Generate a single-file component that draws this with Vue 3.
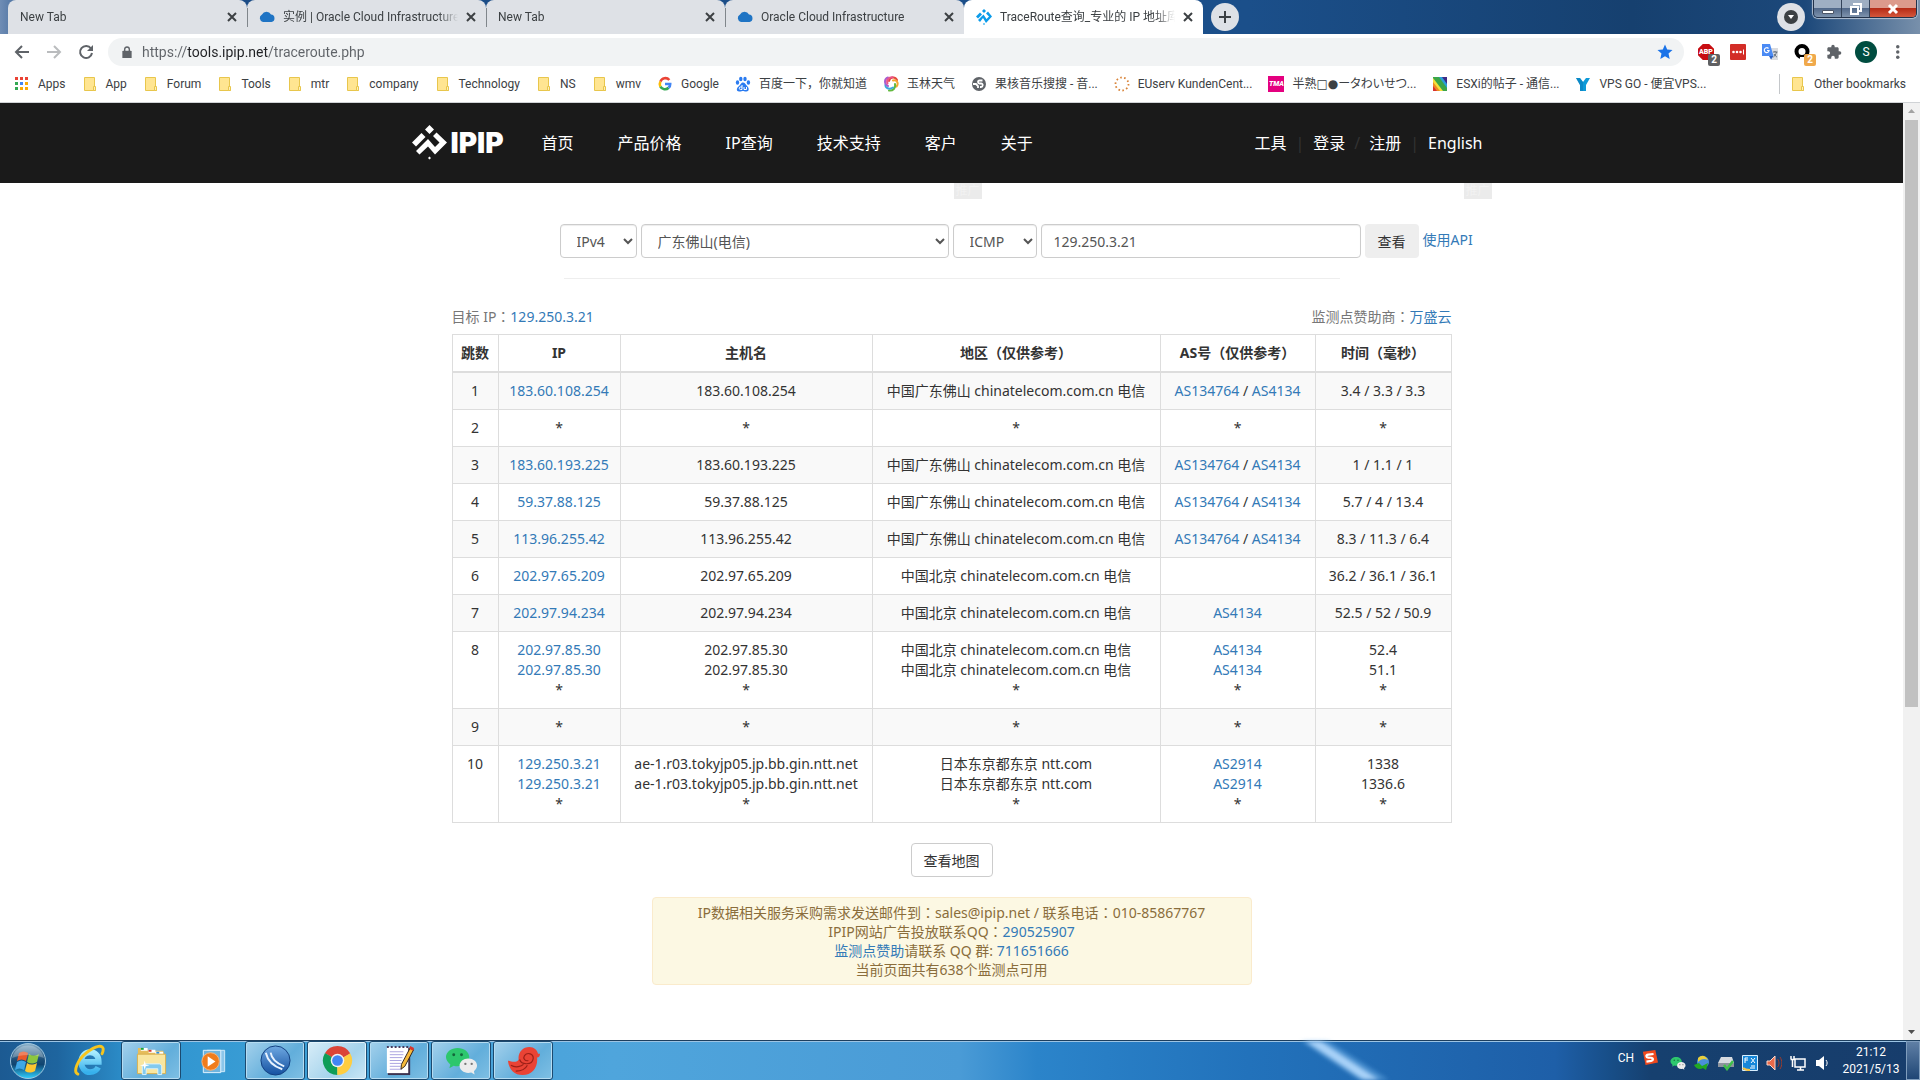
<script setup>

import { ref } from 'vue';

const tabs = ref([
  { title: "New Tab", icon: "", active: false },
  { title: "实例 | Oracle Cloud Infrastructure", icon: "cloud", active: false },
  { title: "New Tab", icon: "", active: false },
  { title: "Oracle Cloud Infrastructure", icon: "cloud", active: false },
  { title: "TraceRoute查询_专业的 IP 地址库", icon: "ipip", active: true },
]);

const bookmarks = [
  { title: "Apps", icon: "apps" },
  { title: "App", icon: "folder" },
  { title: "Forum", icon: "folder" },
  { title: "Tools", icon: "folder" },
  { title: "mtr", icon: "folder" },
  { title: "company", icon: "folder" },
  { title: "Technology", icon: "folder" },
  { title: "NS", icon: "folder" },
  { title: "wmv", icon: "folder" },
  { title: "Google", icon: "google" },
  { title: "百度一下，你就知道", icon: "baidu" },
  { title: "玉林天气", icon: "weather" },
  { title: "果核音乐搜搜 - 音...", icon: "globe" },
  { title: "EUserv KundenCent...", icon: "euserv" },
  { title: "半熟□●ータわいせつ...", label: "TMA", labelClass: "text-icon--pink", kana: true },
  { title: "ESXi的帖子 - 通信...", icon: "rainbow" },
  { title: "VPS GO - 便宜VPS...", icon: "vps" },
];

const extensions = [
  { name: "ABP", label: "ABP", labelClass: "text-icon--octagon", badge: "2", badgeClass: "badge--grey" },
  { name: "LastPass", icon: "lastpass" },
  { name: "Translate", icon: "translate" },
  { name: "Ring", icon: "ring", badge: "2", badgeClass: "badge--orange" },
  { name: "Extensions", icon: "puzzle" },
];

const url = ref("https://tools.ipip.net/traceroute.php");

const siteNav = ["首页", "产品价格", "IP查询", "技术支持", "客户", "关于"];

const version = ref("IPv4");
const node = ref("广东佛山(电信)");
const protocol = ref("ICMP");
const target = ref("129.250.3.21");

const columns = ["跳数", "IP", "主机名", "地区（仅供参考）", "AS号（仅供参考）", "时间（毫秒）"];

const foshan = "中国广东佛山 chinatelecom.com.cn 电信";
const beijing = "中国北京 chinatelecom.com.cn 电信";
const tokyo = "日本东京都东京 ntt.com";
const tokyoHost = "ae-1.r03.tokyjp05.jp.bb.gin.ntt.net";

function createHop(id, ips, hosts, regions, asns, times) {
  return { id, ips, hosts, regions, asns, times };
}

function createLostHop(id) {
  return createHop(id, ["*"], ["*"], ["*"], [["*"]], ["*"]);
}

const hops = ref([
  createHop(1, ["183.60.108.254"], ["183.60.108.254"], [foshan], [["AS134764", "AS4134"]], ["3.4 / 3.3 / 3.3"]),
  createLostHop(2),
  createHop(3, ["183.60.193.225"], ["183.60.193.225"], [foshan], [["AS134764", "AS4134"]], ["1 / 1.1 / 1"]),
  createHop(4, ["59.37.88.125"], ["59.37.88.125"], [foshan], [["AS134764", "AS4134"]], ["5.7 / 4 / 13.4"]),
  createHop(5, ["113.96.255.42"], ["113.96.255.42"], [foshan], [["AS134764", "AS4134"]], ["8.3 / 11.3 / 6.4"]),
  createHop(6, ["202.97.65.209"], ["202.97.65.209"], [beijing], [], ["36.2 / 36.1 / 36.1"]),
  createHop(7, ["202.97.94.234"], ["202.97.94.234"], [beijing], [["AS4134"]], ["52.5 / 52 / 50.9"]),
  createHop(8, ["202.97.85.30", "202.97.85.30", "*"], ["202.97.85.30", "202.97.85.30", "*"], [beijing, beijing, "*"], [["AS4134"], ["AS4134"], ["*"]], ["52.4", "51.1", "*"]),
  createLostHop(9),
  createHop(10, ["129.250.3.21", "129.250.3.21", "*"], [tokyoHost, tokyoHost, "*"], [tokyo, tokyo, "*"], [["AS2914"], ["AS2914"], ["*"]], ["1338", "1336.6", "*"]),
]);

const tasks = [
  { name: "Internet Explorer", icon: "ie", open: false },
  { name: "Explorer", icon: "explorer", open: true },
  { name: "Media Player", icon: "player", open: false },
  { name: "Router", icon: "router", open: true },
  { name: "Chrome", icon: "chrome", open: true, current: true },
  { name: "Notepad", icon: "notepad", open: true },
  { name: "WeChat", icon: "wechat", open: true },
  { name: "Nautilus", icon: "nautilus", open: true },
];

const trayIcons = ["wechat", "idm", "drive", "panel", "speaker", "network", "volume"];

function selectTab(tab) {
  for (const item of tabs.value) {
    item.active = item === tab;
  }
}

</script>

<template>
  <svg class="sprite" aria-hidden="true">
    <defs>
      <linearGradient id="g-orb" x1="0" y1="0" x2="0" y2="1">
        <stop offset="0" stop-color="#8fb4cc" />
        <stop offset=".45" stop-color="#1d4f78" />
        <stop offset=".6" stop-color="#0f4470" />
        <stop offset="1" stop-color="#2fd0ff" />
      </linearGradient>
      <linearGradient id="g-ie" x1="0" y1="0" x2="0" y2="1">
        <stop offset="0" stop-color="#a8ecff" />
        <stop offset="1" stop-color="#36b0ec" />
      </linearGradient>
      <linearGradient id="g-router" x1="0" y1="0" x2="0" y2="1">
        <stop offset="0" stop-color="#6fa9e2" />
        <stop offset="1" stop-color="#1450a0" />
      </linearGradient>
    </defs>
    <symbol id="i-cloud" viewBox="0 0 16 16">
      <path fill="#1f74c4" d="M4 13a4 4 0 0 1-1-7.500A5 5 0 0 1 12 5.500 3.800 3.800 0 0 1 12.500 13z" />
    </symbol>
    <symbol id="i-ipip" viewBox="0 0 16 16">
      <g fill="#0a9bea">
        <path d="M8 0l2 2-2 2-2-2zM8 14l1 1-1 1-1-1z" />
        <path d="M0 7.500l4-4 2 2-4 4z" />
        <path d="M2 11l5.500-5.500 3 4.500 2.500-2.500-3-3L12 2.500l4 5-6 6.500-3-5-3 4z" />
      </g>
    </symbol>
    <symbol id="i-apps" viewBox="0 0 16 16">
      <path fill="#ea4335" d="M1 1h3v3H1zM6 1h3v3H6zM11 1h3v3h-3z" />
      <path fill="#34a853" d="M1 6h3v3H1zM1 11h3v3H1z" />
      <path fill="#4285f4" d="M6 6h3v3H6z" />
      <path fill="#fbaa05" d="M11 6h3v3h-3zM6 11h3v3H6zM11 11h3v3h-3z" />
    </symbol>
    <symbol id="i-folder" viewBox="0 0 16 16">
      <path fill="#ffe591" stroke="#e8c64c" d="M2.500 1.500h10v9l1 1v3h-11z" />
      <path fill="#fff0b8" stroke="#e8c64c" d="M11.500 10.500h2v4h-2z" />
    </symbol>
    <symbol id="i-google" viewBox="0 0 16 16">
      <g fill="none" stroke-width="2.600">
        <path stroke="#ea4335" d="M12.300 4A5.200 5.200 0 0 0 3.400 5.600" />
        <path stroke="#fbbc05" d="M3.400 5.600a5.200 5.200 0 0 0 0 5" />
        <path stroke="#34a853" d="M3.400 10.600a5.200 5.200 0 0 0 8.200 1.200" />
        <path stroke="#4285f4" d="M11.600 11.800A5 5 0 0 0 13.200 8H8" />
      </g>
    </symbol>
    <symbol id="i-baidu" viewBox="0 0 16 16">
      <g fill="#2a7bf0">
        <ellipse cx="2.500" cy="6.500" rx="1.700" ry="2.200" />
        <ellipse cx="5.800" cy="3" rx="1.700" ry="2.300" />
        <ellipse cx="10" cy="3" rx="1.700" ry="2.300" />
        <ellipse cx="13.400" cy="6.500" rx="1.700" ry="2.200" />
        <path d="M8 6.500c2 0 2.500 2 4.500 4s1.500 5-1 5-2.500-.5-3.500-.5-1.500.500-4 .500-3-3-.500-5S6 6.500 8 6.500z" />
      </g>
      <path fill="none" stroke="#fff" d="M7 9v4.500H5.500a1 1 0 0 1 0-2.500H7M9 11v2.500h2.500V11" />
    </symbol>
    <symbol id="i-weather" viewBox="0 0 16 16">
      <g fill="none" stroke-width="2" stroke-linecap="round">
        <path stroke="#e5483b" d="M6 5C7 1 12 0 14 4" />
        <path stroke="#f4a72f" d="M10 4.500c4-1 6 3 3.500 6" />
        <path stroke="#63b93e" d="M12 8c1 4-2 7-6 6.500" />
        <path stroke="#3aa8dd" d="M10 11.500C6 14 2 12 2.500 8.500" />
        <path stroke="#a85fd0" d="M5 10C1 8 1 3 5 1.500" />
        <path stroke="#e9568b" d="M4.500 7.500C3 4 6 1 9.500 1.300" />
      </g>
    </symbol>
    <symbol id="i-globe" viewBox="0 0 16 16">
      <circle cx="8" cy="8" r="7" fill="#5f6368" />
      <path fill="none" stroke="#fff" stroke-width="1.800" d="M11.500 4.500H8.500c-2 0-2 3 0 3h1.500c2.500 0 2 3.500 0 3.500H9M2 8h3l2 2v2" />
    </symbol>
    <symbol id="i-euserv" viewBox="0 0 16 16">
      <circle cx="8" cy="8" r="6.500" fill="none" stroke="#d9853b" stroke-width="1.800" stroke-dasharray="1.600 2.400" />
    </symbol>
    <symbol id="i-rainbow" viewBox="0 0 16 16">
      <path fill="#3f2b86" d="M1 1h14v14H1z" />
      <path fill="#2b9fd9" d="M1 1h9l5 7v7H1z" />
      <path fill="#3ba64a" d="M1 1h6l8 11v3H1z" />
      <path fill="#f5e03a" d="M1 2l10 13H1z" />
      <path fill="#f08a24" d="M1 6l7 9H1z" />
      <path fill="#d8322f" d="M1 10l4 5H1z" />
    </symbol>
    <symbol id="i-vps" viewBox="0 0 16 16">
      <path fill="#0e9ad8" d="M1 2h4l3 4 3-4h4l-4 7v6H5V9z" />
      <path fill="#0878b5" d="M1 2h4l3 4v9H5V9z" opacity=".5" />
    </symbol>
    <symbol id="i-lastpass" viewBox="0 0 16 16">
      <rect width="16" height="16" rx="1" fill="#d32d27" />
      <g fill="#fff">
        <circle cx="3.500" cy="8" r="1.300" />
        <circle cx="7" cy="8" r="1.300" />
        <circle cx="10.500" cy="8" r="1.300" />
        <path d="M13 5.500h1v5h-1z" />
      </g>
    </symbol>
    <symbol id="i-translate" viewBox="0 0 16 16">
      <path fill="#dadce0" d="M7 4h9v12H9z" />
      <path fill="#4a8af4" d="M0 0h8l3.500 12H0z" />
      <path fill="#2b61c4" d="M7 12h4.500L9 15.500z" />
      <path fill="none" stroke="#fff" stroke-width="1.200" d="M6.500 4.500a2.400 2.400 0 1 0 .6 2H5" />
      <path fill="none" stroke="#5f6b78" d="M11 8h4.500M13 7v1M14.500 8c-.500 2-1.500 4-3 5M12 10c1 1.500 2 2.500 3 3" />
    </symbol>
    <symbol id="i-ring" viewBox="0 0 16 16">
      <circle cx="8" cy="7.500" r="5.500" fill="none" stroke="#000" stroke-width="4" />
      <path fill="#fff" d="M6 13h4v3H6z" />
    </symbol>
    <symbol id="i-puzzle" viewBox="0 0 24 24">
      <path fill="#5f6368" d="M20.500 11H19V7c0-1.100-.9-2-2-2h-4V3.500a2.500 2.500 0 0 0-5 0V5H4c-1.100 0-2 .9-2 2v3.800h1.500a2.700 2.700 0 0 1 0 5.400H2V20c0 1.100.9 2 2 2h3.800v-1.500a2.700 2.700 0 0 1 5.400 0V22H17c1.100 0 2-.9 2-2v-4h1.500a2.500 2.500 0 0 0 0-5z" />
    </symbol>
    <symbol id="i-ie" viewBox="0 0 34 34">
      <path fill="none" stroke="url(#g-ie)" stroke-width="6" d="M8 18.500h18.500C26.500 12 23 8.500 17.500 8.500S8.500 13 8.500 18.500 12 29 17.500 29c4 0 7-2 8.500-5" />
      <path fill="none" stroke="#f6c51e" stroke-width="3" stroke-linecap="round" d="M5 31C0 29 4 17 14 9S31 1 31 5c.3 1.500 0 3-1 5" />
    </symbol>
    <symbol id="i-explorer" viewBox="0 0 34 34">
      <path fill="#e6bd5c" d="M3 4h9l2 3h15l1 3v18H3z" />
      <path fill="#fff" d="M6 4h7v3H6zM14 6h7v3h-7zM21 8h8v3h-8z" />
      <path fill="#1aa53b" d="M6 4h3v2H6z" />
      <path fill="#d93a2b" d="M14 6h3v2h-3z" />
      <path fill="#2b8fdd" d="M22 8h3v2h-3z" />
      <path fill="#f9e6a0" stroke="#d9b04e" d="M2.500 10.500h29v20h-29z" />
      <path fill="#83caee" stroke="#d9f3ff" d="M7.500 31.500v-9l2-2h16l2 2v9h-4v-6h-12v6z" />
      <path fill="#fff" d="M10 17l1 4 4 1-4 1-1 4-1-4-4-1 4-1z" />
    </symbol>
    <symbol id="i-player" viewBox="0 0 34 34">
      <path fill="#8cc6ea" stroke="#cfeafa" d="M10.500 6.500h18v22h-18z" />
      <path fill="#6fb4de" stroke="#e3f4ff" d="M6.500 6.500h18v23h-18z" />
      <circle cx="14" cy="18" r="9" fill="#f07c1c" stroke="#f9b57a" />
      <path fill="#fff" d="M11 12.500l8 5.500-8 5.500z" />
    </symbol>
    <symbol id="i-router" viewBox="0 0 34 34">
      <circle cx="17" cy="17" r="15" fill="url(#g-router)" stroke="#123f80" />
      <g fill="none" stroke="#e8f3ff" stroke-width="2">
        <path d="M7 9c2 9 8 14 17 17" />
        <path d="M12 9c1 7 6 11 14 14" />
      </g>
    </symbol>
    <symbol id="i-chrome" viewBox="0 0 34 34">
      <path fill="#db4437" d="M17 17L4 9.500a15 15 0 0 1 26 0z" />
      <path fill="#0f9d58" d="M17 17v15A15 15 0 0 1 4 9.500z" />
      <path fill="#ffcd40" d="M17 17L30 9.500A15 15 0 0 1 17 32z" />
      <path fill="#db4437" d="M17 9.500h13L17 17z" />
      <path fill="#0f9d58" d="M4 9.500l6.500 11.300L17 17z" />
      <path fill="#ffcd40" d="M23.500 20.800L17 32V17z" />
      <circle cx="17" cy="17" r="7" fill="#f1f1f1" />
      <circle cx="17" cy="17" r="5.500" fill="#4285f4" />
    </symbol>
    <symbol id="i-notepad" viewBox="0 0 34 34">
      <path fill="#3d3350" d="M5 4h23v28H5z" />
      <path fill="#fff" d="M4 3h22v27H4z" />
      <path stroke="#a9a3e0" stroke-width="1" d="M7 8h14M7 11h14M7 14h13M7 17h12M7 20h12M7 23h11M7 26h12" />
      <path stroke="#453a5e" stroke-width="2" stroke-dasharray="2 2" d="M4 3h22" />
      <path fill="#f6b93b" stroke="#33241a" d="M28 4l3.500 2-9 17-4 3 .5-5z" />
      <path fill="#d8352c" d="M28 2l4 2-1 3-4-2z" />
    </symbol>
    <symbol id="i-wechat" viewBox="0 0 34 34">
      <path fill="#2dc76d" d="M13 4c6.500 0 12 4 12 9.500S19.500 23 13 23c-1.500 0-3-.2-4-.6L4.500 25l1-4C3 19 1 16.500 1 13.500 1 8 6.500 4 13 4z" />
      <circle cx="9" cy="11" r="1.500" fill="#14663a" />
      <circle cx="17" cy="11" r="1.500" fill="#14663a" />
      <path fill="#ececec" d="M24 15c5 0 9 3 9 7.500 0 2.300-1.500 4.200-3.200 5.500l.7 3.300-3.500-2c-1 .3-2 .5-3 .5-5 0-9-3-9-7.300s4-7.500 9-7.500z" />
      <circle cx="21" cy="20.500" r="1.200" fill="#777" />
      <circle cx="27.500" cy="20.500" r="1.200" fill="#777" />
    </symbol>
    <symbol id="i-nautilus" viewBox="0 0 34 34">
      <path fill="#ea4335" d="M1 17c5 2 10 2 11-1-1-7 4-13 11-13 5 0 8 3 9 7h2c0 2-1 4-3 4 1 10-5 18-15 18C8 32 2 27 1 17z" />
      <path fill="none" stroke="#9c2018" stroke-width="1.200" d="M13 16c2 6 13 6 14-1 .5-5-6-7-9-3-2 3 1 6 4 5M4 22c5 3 11 1 13-1M9 28c5 0 10-2 12-6" />
    </symbol>
    <symbol id="i-idm" viewBox="0 0 16 16">
      <circle cx="9" cy="7" r="6" fill="#4a90d9" />
      <path fill="#e8cf3d" d="M4 3c4-4 8-2 10 2-4-2-7-1-10 2z" />
      <path fill="#22a822" d="M0 10l5-2 3 3 6-3-2 7-3-2c-3 2-7 1-9-3z" />
    </symbol>
    <symbol id="i-drive" viewBox="0 0 16 16">
      <path fill="#d7dbe0" d="M3 2h11l2 6H0z" />
      <path fill="#8c949d" d="M0 8h16v4H0z" />
      <path fill="none" stroke="#3fbf4a" stroke-width="2.500" d="M6 10l3 4 6-8" />
    </symbol>
    <symbol id="i-panel" viewBox="0 0 16 16">
      <path fill="#1687d9" stroke="#d8efff" d="M.5.5h15v15H.5z" />
      <path fill="none" stroke="#fff" d="M3 3h3M3 3v5M3 5h3M9 3l4 5M13 3L9 8M9 11h4M8 13h5" />
      <path fill="none" stroke="#f5c344" stroke-width="2" d="M1 13c2 2 5 2 7 2" />
    </symbol>
    <symbol id="i-speaker" viewBox="0 0 16 16">
      <path fill="#e96a4a" stroke="#fbd6ca" d="M1 6h3l5-5v14l-5-5H1z" />
      <path fill="none" stroke="#a33b2a" d="M11.500 4c2 2 2 6 0 8M14 2c2.500 4 2.500 8 0 12" />
    </symbol>
    <symbol id="i-network" viewBox="0 0 16 16">
      <path fill="#1c4474" stroke="#fff" stroke-width="1.500" d="M5 4h10v8H5zM7 15h7M10.500 12v3" />
      <path stroke="#fff" stroke-width="1.500" d="M1 1v3M4 1v3M.5 4.500h4.500M2.500 4v8" />
    </symbol>
    <symbol id="i-volume" viewBox="0 0 16 16">
      <path fill="#fff" d="M2 5h3l5-4v14l-5-4H2z" />
      <path fill="none" stroke="#fff" d="M12 5c1.500 2 1.500 4 0 6" />
    </symbol>
  </svg>

  <div class="desktop">
    <header class="browser">
      <div class="tab-strip">
        <div class="tab" v-for="tab in tabs" :class="{ 'tab--active': tab.active }" @click="selectTab(tab)">
          <svg v-if="tab.icon" class="icon"><use :href="'#i-' + tab.icon" /></svg>
          <span class="tab-title">{{ tab.title }}</span>
          <button class="tab-close" aria-label="Close">
            <svg viewBox="0 0 10 10"><path d="M1 1l8 8M9 1L1 9" /></svg>
          </button>
        </div>
        <button class="round-btn" aria-label="New tab">
          <svg viewBox="0 0 14 14"><path d="M7 1v12M1 7h12" /></svg>
        </button>
        <div class="window-controls">
          <button class="round-btn round-btn--menu" aria-label="Search tabs">
            <svg viewBox="0 0 14 14"><circle cx="7" cy="7" r="7" /><path d="M4 5h6l-3 4z" /></svg>
          </button>
          <div class="caption-btns">
            <button class="caption-btn" aria-label="Minimize">
              <svg viewBox="0 0 14 14"><path fill="#fff" stroke="#4c5566" d="M1.500 8.500h11v3h-11z" /></svg>
            </button>
            <button class="caption-btn" aria-label="Restore">
              <svg viewBox="0 0 14 14"><path fill="none" stroke="#fff" stroke-width="2" d="M5 3V2h7v7h-2M2 5h7v7H2z" /></svg>
            </button>
            <button class="caption-btn caption-btn--close" aria-label="Close window">
              <svg viewBox="0 0 14 14"><path fill="none" stroke="#fff" stroke-width="3" d="M3 3l8 8M11 3l-8 8" /></svg>
            </button>
          </div>
        </div>
      </div>

      <div class="toolbar">
        <button class="nav-btn" aria-label="Back">
          <svg viewBox="0 0 16 16"><path d="M15 8H2M8 2L2 8l6 6" /></svg>
        </button>
        <button class="nav-btn nav-btn--disabled" aria-label="Forward">
          <svg viewBox="0 0 16 16"><path d="M1 8h13M8 2l6 6-6 6" /></svg>
        </button>
        <button class="nav-btn" aria-label="Reload">
          <svg viewBox="0 0 16 16"><path d="M13 4.500A6 6 0 1 0 14 9" /><path class="solid" d="M15 1v6H9z" /></svg>
        </button>
        <div class="omnibox">
          <svg class="lock" viewBox="0 0 10 14"><path d="M1 5h8a1 1 0 0 1 1 1v7H0V6a1 1 0 0 1 1-1z" /><path class="shackle" d="M2.500 6V3.500a2.500 2.500 0 0 1 5 0V6" /></svg>
          <input class="url" type="text" aria-label="Address" v-model="url">
          <button class="star" aria-label="Bookmark">
            <svg viewBox="0 0 16 16"><path d="M8 .5l2.200 5 5.300.5-4 3.600 1.200 5.400L8 12.200 3.300 15l1.200-5.400-4-3.600 5.300-.5z" /></svg>
          </button>
        </div>
        <div class="extensions">
          <button class="extension" v-for="item in extensions" :aria-label="item.name">
            <span v-if="item.label" class="text-icon" :class="item.labelClass">{{ item.label }}</span>
            <svg v-else class="icon"><use :href="'#i-' + item.icon" /></svg>
            <span v-if="item.badge" class="badge" :class="item.badgeClass">{{ item.badge }}</span>
          </button>
        </div>
        <button class="avatar">S</button>
        <button class="menu" aria-label="Menu">
          <svg viewBox="0 0 4 16"><circle cx="2" cy="2" r="2" /><circle cx="2" cy="8" r="2" /><circle cx="2" cy="14" r="2" /></svg>
        </button>
      </div>

      <nav class="bookmarks">
        <a class="bookmark" href="#" v-for="item in bookmarks" :class="{ 'bookmark--kana': item.kana }">
          <span v-if="item.label" class="text-icon" :class="item.labelClass">{{ item.label }}</span>
          <svg v-else class="icon"><use :href="'#i-' + item.icon" /></svg>
          <span>{{ item.title }}</span>
        </a>
        <a class="bookmark bookmark--other" href="#">
          <svg class="icon"><use href="#i-folder" /></svg>
          <span>Other bookmarks</span>
        </a>
      </nav>
    </header>

    <div class="viewport">
      <div class="page">
        <header class="site-header">
          <div class="site-bar">
            <a class="logo" href="#">
              <svg viewBox="0 0 36 36">
                <path d="M17.500 0l4.500 4.500-4.500 4.500-4.500-4.500zM17.500 31.500l1.500 1.500-1.500 1.500-1.500-1.500z" />
                <path d="M0 17.500L9.500 8l4 4L4 21.500z" />
                <path d="M4 26l12-12 7 8 4.500-4.500L21 11l3.500-3.500L35 17.500 23 29.500l-7-8L7.500 29.500z" />
              </svg>
              <span>IPIP</span>
            </a>
            <nav class="site-nav">
              <a href="#" v-for="item in siteNav">{{ item }}</a>
            </nav>
            <nav class="user-nav">
              <a href="#">工具</a>
              <span>|</span>
              <a href="#">登录</a>
              <span>/</span>
              <a href="#">注册</a>
              <span>|</span>
              <a href="#">English</a>
            </nav>
          </div>
        </header>

        <div class="promos">
          <span class="promo">推广</span>
          <span class="promo">推广</span>
        </div>

        <main>
          <form class="query" @submit.prevent>
            <select class="control control--version" aria-label="IP version" v-model="version">
              <option>IPv4</option>
              <option>IPv6</option>
            </select>
            <select class="control control--node" aria-label="监测点" v-model="node">
              <option>广东佛山(电信)</option>
            </select>
            <select class="control control--protocol" aria-label="Protocol" v-model="protocol">
              <option>ICMP</option>
              <option>TCP</option>
            </select>
            <input class="control control--target" type="text" aria-label="IP" v-model="target">
            <button class="btn btn--flat">查看</button>
            <a class="api-link" href="#">使用API</a>
          </form>
          <hr>

          <div class="summary">
            <span>目标 IP<span class="colon">：</span><a href="#">{{ target }}</a></span>
            <span>监测点赞助商<span class="colon">：</span><a href="#">万盛云</a></span>
          </div>

          <table>
            <colgroup>
              <col class="col-hop">
              <col class="col-ip">
              <col class="col-host">
              <col class="col-region">
              <col class="col-as">
              <col>
            </colgroup>
            <thead>
              <tr>
                <th v-for="column in columns">{{ column }}</th>
              </tr>
            </thead>
            <tbody>
              <tr v-for="hop in hops" :key="hop.id">
                <td>{{ hop.id }}</td>
                <td>
                  <div v-for="ip in hop.ips">
                    <template v-if="ip === '*'">*</template>
                    <a v-else href="#">{{ ip }}</a>
                  </div>
                </td>
                <td>
                  <div v-for="host in hop.hosts">{{ host }}</div>
                </td>
                <td>
                  <div v-for="region in hop.regions">{{ region }}</div>
                </td>
                <td>
                  <div v-for="line in hop.asns">
                    <template v-for="(asn, index) in line">
                      <template v-if="index > 0"> / </template>
                      <template v-if="asn === '*'">*</template>
                      <a v-else href="#">{{ asn }}</a>
                    </template>
                  </div>
                </td>
                <td>
                  <div v-for="time in hop.times">{{ time }}</div>
                </td>
              </tr>
            </tbody>
          </table>

          <button class="btn btn--map">查看地图</button>

          <div class="notice">
            <div>IP数据相关服务采购需求发送邮件到<span class="colon">：</span>sales@ipip.net / 联系电话<span class="colon">：</span>010-85867767</div>
            <div>IPIP网站广告投放联系QQ<span class="colon">：</span><a href="#">290525907</a></div>
            <div><a href="#">监测点赞助</a>请联系 QQ 群: <a href="#">711651666</a></div>
            <div>当前页面共有638个监测点可用</div>
          </div>
        </main>
      </div>

      <div class="scrollbar">
        <svg viewBox="0 0 17 17"><path fill="#a3a3a3" d="M5 10l3.500-4 3.500 4z" /></svg>
        <div class="scroll-track">
          <div class="scroll-thumb"></div>
        </div>
        <svg viewBox="0 0 17 17"><path fill="#505050" d="M5 7l3.500 4L12 7z" /></svg>
      </div>
    </div>

    <footer class="taskbar">
      <button class="start" aria-label="Start">
        <svg viewBox="0 0 38 38">
          <circle cx="19" cy="19" r="17.500" fill="url(#g-orb)" stroke="#9fc6de" />
          <path fill="#e8592b" d="M10 11c3-2 6-2 9 0l-2 8c-3-2-6-2-9 0z" />
          <path fill="#8cc63e" d="M20 12c3 2 6 2 10 0l-2 8c-4 2-7 2-10 0z" />
          <path fill="#3fa7e6" d="M8 20c3-2 6-2 9 0l-2 8c-3-2-6-2-9 0z" />
          <path fill="#fcc630" d="M18 21c3 2 6 2 10 0l-2 8c-4 2-7 2-10 0z" />
          <path fill="#fff" opacity=".25" d="M3 16a16.500 16.500 0 0 1 32 0c-10-4-22-4-32 0z" />
        </svg>
      </button>
      <div class="tasks">
        <button class="task" v-for="task in tasks" :class="{ 'task--open': task.open, 'task--current': task.current }" :aria-label="task.name">
          <svg><use :href="'#i-' + task.icon" /></svg>
        </button>
      </div>
      <svg class="streak" viewBox="0 0 90 40" aria-hidden="true">
        <path fill="#6fb1ea" opacity=".5" d="M0 0h28l62 40H60z" />
        <path fill="#a9d2f8" d="M4 0h16l60 40H64z" />
      </svg>
      <div class="tray">
        <span class="lang">CH</span>
        <svg class="sogou" viewBox="0 0 18 18">
          <path fill="#f0491d" d="M1 2l14-2 3 14-14 3z" />
          <path fill="none" stroke="#fff" stroke-width="2.500" d="M13 4.500L7 5.300c-3 .5-2.500 3 0 3.200l3 .2c3 .3 3 3 .3 3.600L5 13" />
        </svg>
        <svg class="icon" v-for="icon in trayIcons"><use :href="'#i-' + icon" /></svg>
        <div class="clock">
          <div>21:12</div>
          <div>2021/5/13</div>
        </div>
        <button class="show-desktop" aria-label="Show desktop"></button>
      </div>
    </footer>
  </div>
</template>

<style>
  body {
    margin: 0;
    overflow: hidden;
  }
</style>

<style scoped>
  * {
    box-sizing: border-box;
  }

  a {
    color: #337ab7;
    text-decoration: none;
  }

  button {
    padding: 0;
    border: none;
    background: none;
    font-family: inherit;
    cursor: pointer;
  }

  .sprite {
    position: absolute;
    width: 0;
    height: 0;
  }

  .icon {
    width: 16px;
    height: 16px;
    flex: none;
  }

  .desktop {
    height: 100vh;
    display: flex;
    flex-direction: column;
    font-family: "Noto Sans", "Noto Sans CJK SC", sans-serif;
    font-size: 14px;
    line-height: 20px;
    color: #333;
  }

  /* browser window */

  .browser {
    flex: none;
    font-family: Roboto, "Noto Sans CJK SC", sans-serif;
    font-size: 12px;
    color: #3c4043;
    background-color: #fff;
    border-bottom: 1px solid #d0d3d6;
  }

  .tab-strip {
    height: 34px;
    padding-left: 8px;
    display: flex;
    background: linear-gradient(90deg, #6f8db5 0, #1b4b85 2%, #1b4f8a 65%, #16406f 85%, #1c487a 94%, #7890ab 100%);
  }

  .tab {
    position: relative;
    flex: 0 1 239px;
    min-width: 0;
    padding: 0 10px 0 12px;
    display: flex;
    align-items: center;
    gap: 8px;
    border-radius: 8px 8px 0 0;
    background-color: #dee1e6;
  }

  .tab + .tab:not(.tab--active)::before {
    content: "";
    position: absolute;
    left: 0;
    top: 8px;
    width: 1px;
    height: 19px;
    background-color: #80868b;
  }

  .tab--active {
    background-color: #fff;
  }

  .tab-title {
    flex: 1;
    overflow: hidden;
    white-space: nowrap;
    mask-image: linear-gradient(90deg, #000 calc(100% - 20px), transparent);
  }

  .tab-close {
    width: 10px;
    height: 10px;
    display: flex;
  }

  .tab-close svg {
    width: 10px;
    fill: none;
    stroke: #3c4043;
    stroke-width: 2;
  }

  .round-btn {
    width: 28px;
    height: 28px;
    margin: 3px 8px;
    display: flex;
    align-items: center;
    justify-content: center;
    border-radius: 14px;
    background-color: #dee1e6;
  }

  .round-btn svg {
    width: 14px;
    height: 14px;
    fill: none;
    stroke: #3c4043;
    stroke-width: 2;
  }

  .round-btn--menu svg {
    stroke: none;
    fill: #3c4043;
  }

  .round-btn--menu path {
    fill: #fff;
  }

  .window-controls {
    margin-left: auto;
    padding-right: 3px;
    display: flex;
    align-items: flex-start;
  }

  .caption-btns {
    height: 18px;
    display: flex;
    border: 1px solid #22324a;
    border-top: none;
    border-radius: 0 0 5px 5px;
    overflow: hidden;
    box-shadow: 0 0 1px 1px #b5c3d4;
  }

  .caption-btn {
    width: 28px;
    display: flex;
    align-items: center;
    justify-content: center;
    border-right: 1px solid #33435a;
    background: linear-gradient(#9fafc3 45%, #52698a 50%, #7e93ad);
  }

  .caption-btn svg {
    width: 14px;
    height: 14px;
  }

  .caption-btn--close {
    width: 46px;
    border-right: none;
    background: linear-gradient(#dc9a8c 45%, #b62c17 50%, #d4573c);
  }

  .toolbar {
    height: 36px;
    padding: 0 14px;
    display: flex;
    align-items: center;
    gap: 16px;
  }

  .nav-btn {
    width: 16px;
    height: 16px;
  }

  .nav-btn svg {
    display: block;
    fill: none;
    stroke: #5f6368;
    stroke-width: 2;
  }

  .nav-btn--disabled svg {
    stroke: #babcbe;
  }

  .nav-btn .solid {
    fill: #5f6368;
    stroke: none;
  }

  .omnibox {
    flex: 1;
    height: 28px;
    margin-left: -2px;
    margin-right: -2px;
    padding: 0 11px 0 14px;
    display: flex;
    align-items: center;
    gap: 10px;
    border-radius: 14px;
    background-color: #f1f3f4;
  }

  .lock {
    width: 10px;
    height: 13px;
    fill: #5f6368;
  }

  .lock .shackle {
    fill: none;
    stroke: #5f6368;
    stroke-width: 1.5;
  }

  .url {
    flex: 1;
    height: 28px;
    padding: 0;
    border: none;
    outline: none;
    font-family: inherit;
    font-size: 14px;
    color: #5f6368;
    background: linear-gradient(90deg, #5f6368 45px, #202124 45px, #202124 126px, #5f6368 126px);
    background-clip: text;
    -webkit-text-fill-color: transparent;
  }

  .star {
    width: 16px;
    height: 16px;
  }

  .star svg {
    display: block;
    fill: #1a73e8;
  }

  .extensions {
    display: flex;
    gap: 16px;
  }

  .extension {
    position: relative;
    width: 16px;
    height: 16px;
    display: flex;
  }

  /* square icons made of three small capitals */
  .text-icon {
    width: 16px;
    height: 16px;
    flex: none;
    font-size: 7px;
    font-weight: 900;
    line-height: 16px;
    text-align: center;
    color: #fff;
  }

  .text-icon--pink {
    font-style: italic;
    background-color: #e4007f;
  }

  .text-icon--octagon {
    background-color: #c70d12;
    clip-path: polygon(30% 0, 70% 0, 100% 30%, 100% 70%, 70% 100%, 30% 100%, 0 70%, 0 30%);
  }

  .badge {
    position: absolute;
    left: 10px;
    top: 10px;
    width: 12px;
    border-radius: 2px;
    font-size: 10px;
    font-weight: 700;
    line-height: 12px;
    color: #fff;
  }

  .badge--grey {
    background-color: #5f6062;
  }

  .badge--orange {
    background-color: #f0a94b;
  }

  .avatar {
    width: 22px;
    height: 22px;
    margin-left: -3px;
    border-radius: 11px;
    font-size: 12px;
    color: #fff;
    background-color: #004d40;
  }

  .menu {
    width: 16px;
    height: 14px;
    margin-left: -3px;
    display: flex;
    justify-content: center;
  }

  .menu svg {
    height: 14px;
    fill: #5f6368;
  }

  .bookmarks {
    height: 32px;
    padding: 0 14px 4px;
    display: flex;
    align-items: center;
    gap: 16px;
    white-space: nowrap;
  }

  .bookmark {
    display: flex;
    align-items: center;
    gap: 8px;
    color: #3c4043;
  }

  .bookmark--kana {
    font-family: Roboto, "DejaVu Sans", "Noto Sans CJK JP", sans-serif;
    font-feature-settings: "palt";
  }

  .bookmark--other {
    margin-left: auto;
    padding-left: 10px;
    border-left: 1px solid #c4c7ca;
  }

  /* page */

  .viewport {
    flex: 1;
    min-height: 0;
    display: flex;
    background-color: #fff;
  }

  .page {
    flex: 1;
    overflow: hidden;
  }

  .site-header {
    background-color: #1a1a1a;
  }

  .site-bar {
    max-width: 1080px;
    height: 80px;
    margin: 0 auto;
    padding-right: 9px;
    display: flex;
    align-items: center;
    font-size: 16px;
    white-space: nowrap;
  }

  .site-bar a {
    color: #fff;
  }

  .logo {
    width: 130px;
    display: flex;
    align-items: center;
    gap: 3px;
    font-family: Inter, sans-serif;
    font-size: 28px;
    font-weight: 900;
  }

  .logo svg {
    width: 36px;
    height: 36px;
    fill: #fff;
  }

  .site-nav {
    display: flex;
    gap: 44px;
  }

  .user-nav {
    margin-left: auto;
    display: flex;
    gap: 9px;
    color: #333;
  }

  .promos {
    max-width: 1080px;
    margin: 0 auto;
    display: grid;
    grid-template-columns: 570px 1fr;
    justify-items: end;
  }

  .promo {
    width: 28px;
    font-size: 12px;
    line-height: 16px;
    text-align: center;
    color: #f2f2f2;
    background-color: #ebebeb;
  }

  main {
    max-width: 1000px;
    margin: 25px auto 0;
  }

  .query {
    padding-left: 108px;
    display: flex;
    gap: 4px;
    white-space: nowrap;
  }

  .query > * {
    flex: none;
  }

  .control {
    height: 34px;
    padding: 6px 12px;
    border: 1px solid #ccc;
    border-radius: 4px;
    font-family: inherit;
    font-size: 14px;
    color: #555;
    background-color: #fff;
    box-shadow: inset 0 1px 1px rgba(0, 0, 0, .075);
  }

  select.control {
    padding-right: 0;
  }

  .control--version {
    width: 77px;
  }

  .control--node {
    width: 308px;
  }

  .control--protocol {
    width: 84px;
  }

  .control--target {
    width: 320px;
  }

  .btn {
    height: 34px;
    padding: 0 12px;
    border-radius: 4px;
    font-size: 14px;
    color: #333;
  }

  .btn--flat {
    padding: 0 13px;
    background-color: #eee;
  }

  .api-link {
    padding-top: 6px;
  }

  hr {
    margin: 20px 112px 28px;
    border: none;
    border-top: 1px solid #eee;
  }

  .summary {
    margin-bottom: 7px;
    display: flex;
    justify-content: space-between;
    color: #777;
  }

  .colon {
    font-family: "Noto Sans CJK TC", sans-serif;
    line-height: 1;
  }

  table {
    width: 100%;
    table-layout: fixed;
    border-collapse: collapse;
    text-align: center;
    white-space: nowrap;
  }

  .col-hop {
    width: 46px;
  }

  .col-ip {
    width: 122px;
  }

  .col-host {
    width: 252px;
  }

  .col-region {
    width: 288px;
  }

  .col-as {
    width: 155px;
  }

  th, td {
    padding: 8px 0;
    border: 1px solid #ddd;
    vertical-align: top;
  }

  th {
    border-bottom-width: 2px;
  }

  tbody tr:nth-child(odd) {
    background-color: #f9f9f9;
  }

  .btn--map {
    display: block;
    margin: 20px auto;
    border: 1px solid #ccc;
    background-color: #fff;
  }

  .notice {
    max-width: 600px;
    margin: 0 auto;
    padding: 5px;
    border: 1px solid #faebcc;
    border-radius: 4px;
    line-height: 19px;
    text-align: center;
    color: #8a6d3b;
    background-color: #fcf8e3;
  }

  .scrollbar {
    width: 17px;
    display: flex;
    flex-direction: column;
    background-color: #f1f1f1;
  }

  .scrollbar svg {
    height: 17px;
  }

  .scroll-track {
    flex: 1;
    padding: 0 2px;
  }

  .scroll-thumb {
    height: 65%;
    background-color: #c1c1c1;
  }

  /* taskbar */

  .taskbar {
    flex: none;
    height: 40px;
    display: flex;
    border-top: 1px solid #1d3f5f;
    box-shadow: inset 0 1px 0 #9cc4e4;
    background: linear-gradient(90deg, #1c5a92 0, #1e659f 3%, #2e93cf 7%, #3c9fd6 15%, #4fa5dc 32%, #4a9bd6 50%, #2b84ca 54%, #2272bb 65%, #1e5fa8 81%, #174d86 84%, #16406f 86%, #173d6c 100%);
  }

  .start {
    width: 59px;
    padding-right: 4px;
  }

  .start svg {
    width: 38px;
    height: 38px;
    display: block;
    margin: 0 auto;
  }

  .tasks {
    display: flex;
    gap: 2px;
  }

  .task {
    width: 60px;
    display: flex;
    align-items: center;
    justify-content: center;
    border-radius: 3px;
  }

  .task svg {
    width: 33px;
    height: 33px;
  }

  .task--open {
    border: 1px solid #1b4a70;
    box-shadow: inset 0 0 0 1px #b5dcf2;
    background: linear-gradient(135deg, #a4d1ec, #62aedb 60%, #7fc0e4);
  }

  .task--current {
    box-shadow: inset 0 0 0 1px #e4f4fc;
    background: linear-gradient(135deg, #d8edf8, #a5d3ec 60%, #c9e6f5);
  }

  .streak {
    width: 90px;
    height: 39px;
    margin-left: auto;
    margin-right: 228px;
    filter: blur(2px);
  }

  .tray {
    display: flex;
    align-items: center;
    gap: 8px;
    font-family: Roboto, sans-serif;
    font-size: 12px;
    color: #fff;
  }

  .lang {
    padding-bottom: 6px;
  }

  .sogou {
    width: 16px;
    height: 16px;
    margin-right: 4px;
    margin-bottom: 6px;
  }

  .tray .icon {
    margin-top: 4px;
  }

  .clock {
    width: 66px;
    font-size: 12px;
    line-height: 17px;
    text-align: center;
  }

  .show-desktop {
    width: 14px;
    align-self: stretch;
    margin-left: -6px;
    border: 1px solid #7f9dbd;
    background: linear-gradient(#5f7fa5, #1f4675);
  }

</style>
